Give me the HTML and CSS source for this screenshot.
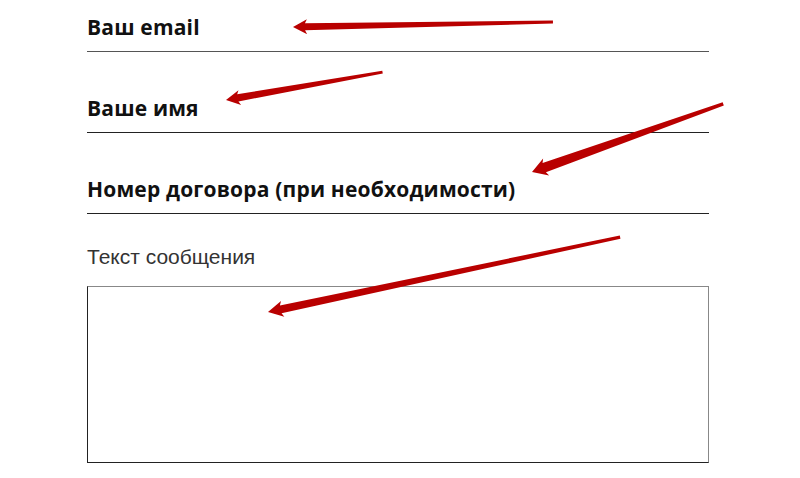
FILE: index.html
```html
<!DOCTYPE html>
<html lang="ru">
<head>
<meta charset="utf-8">
<link rel="stylesheet" href="styles.css">
</head>
<body>
<form class="form">
  <div class="field"><span class="field-label">Ваш email</span></div>
  <div class="field"><span class="field-label">Ваше имя</span></div>
  <div class="field field-last"><span class="field-label">Номер договора (при необходимости)</span></div>
  <div class="message">
    <div class="message-label">Текст сообщения</div>
    <div class="message-box"></div>
  </div>
</form>
<svg class="arrows" width="800" height="478" viewBox="0 0 800 478">
  <g fill="#b90000">
    <polygon transform="translate(293,27) rotate(-1.1)" points="0,0 14,-7.5 12,-3.6 260,-1.6 260,1.6 12,3.6 14,7.5"/>
    <polygon transform="translate(226,100) rotate(-10.1)" points="0,0 14,-7.5 12,-3.6 159,-1.5 159,1.5 12,3.6 14,7.5"/>
    <polygon transform="translate(532,172) rotate(-19.6)" points="0,0 15,-9 13,-5 203,-1.7 203,1.7 13,5 15,9"/>
    <polygon transform="translate(268,312) rotate(-12)" points="0,0 15,-8 13,-4 360,-1.6 360,1.6 13,4 15,8"/>
  </g>
</svg>
</body>
</html>
```
FILE: styles.css
```css
html, body {
  margin: 0;
  padding: 0;
  background: #fff;
}
body {
  width: 800px;
  height: 478px;
  overflow: hidden;
  position: relative;
}
.form {
  margin: 0;
  padding: 15px 0 0 87px;
  width: 622px;
}
.field {
  padding-bottom: 12px;
  border-bottom: 1px solid #222;
  margin-bottom: 44px;
}
.field:first-child {
  border-bottom-color: #555;
}
.field-last {
  margin-bottom: 31px;
}
.field-label {
  display: block;
  font-family: "Open Sans", sans-serif;
  font-weight: 700;
  font-size: 21px;
  letter-spacing: 0.18px;
  line-height: 24px;
  color: #111;
}
.message-label {
  font-family: "Liberation Sans", Arial, sans-serif;
  font-size: 21px;
  line-height: 24px;
  color: #333;
  margin-bottom: 17px;
}
.message-box {
  height: 175px;
  border-style: solid;
  border-width: 1px;
  border-color: #888 #888 #222 #222;
}
.arrows {
  position: absolute;
  left: 0;
  top: 0;
}
```
